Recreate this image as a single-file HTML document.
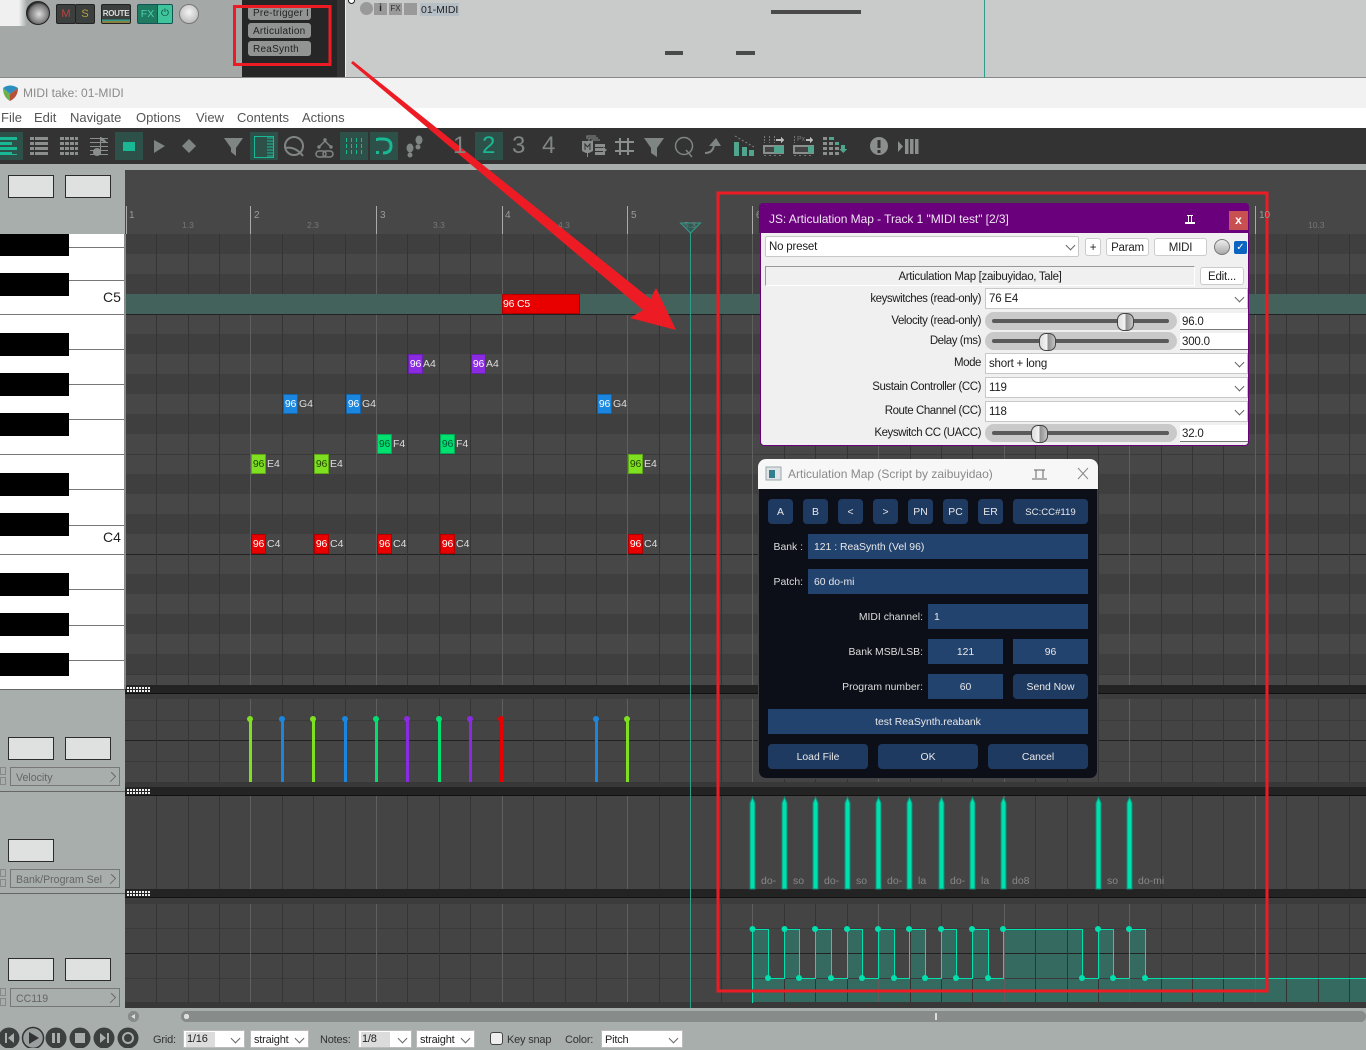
<!DOCTYPE html>
<html><head><meta charset="utf-8"><title>MIDI take: 01-MIDI</title>
<style>
html,body{margin:0;padding:0}
body{width:1366px;height:1048px;position:relative;overflow:hidden;background:#a8aeac;font-family:"Liberation Sans",sans-serif;font-size:12px;color:#222}
div,span{position:absolute;white-space:nowrap;box-sizing:border-box}
svg{position:absolute;left:0;top:0}
.box{background:#dfe1e0;border:1px solid #2c2c2c;width:46px;height:23px}
.sel{left:10px;width:110px;height:19px;border:1px solid #777;color:#666;font-size:10.6px;line-height:20px;padding-left:5px}
.sel b{position:absolute;right:4px;top:5px;width:7px;height:7px;border-top:1px solid #666;border-right:1px solid #666;transform:rotate(45deg) scaleX(.8)}
.pm{left:0;width:6px;height:8px;border:1px solid #888;background:#a8aeac}
.n{height:20px;top:0;font-size:10.5px;line-height:18px;border:1px solid rgba(0,0,0,.25);text-align:center;color:#fff;letter-spacing:-.2px}
.l{font-size:10.5px;color:#ddd;line-height:20px}
.mn{font-size:13px;color:#555;top:110px;line-height:16px}
.bar{font-size:10px;color:#9a9a9a}
.sub{font-size:8.5px;color:#777}
.c{background:#fff;border:1px solid #c8c8c8;border-radius:2px;font-size:11.5px;line-height:18px;padding-left:3px;color:#1c1c1c;letter-spacing:-.2px}
.c i{position:absolute;right:4px;top:4px;width:6px;height:6px;border-right:1px solid #666;border-bottom:1px solid #666;transform:rotate(45deg)}
.btn{background:#fff;border:1px solid #ccc;border-radius:3px;text-align:center;font-size:11.5px;line-height:18px;color:#222;letter-spacing:-.2px}
.lb{right:385px;font-size:11.5px;letter-spacing:-.44px;color:#1c1c1c;text-align:right}
.tr{height:18px;left:985px;width:192px;background:#c9c9c9;border-radius:9px}
.tr u{position:absolute;left:7px;right:8px;top:7px;height:4px;background:#5a5a5a;border-radius:2px}
.tr s{position:absolute;top:1px;width:15px;height:16px;border-radius:7px;background:linear-gradient(90deg,#ddd 0,#f4f4f4 48%,#8f8f8f 52%,#c4c4c4 100%);border:1px solid #444;text-decoration:none}
.ed{left:1180px;width:68px;height:17px;background:#fff;border-bottom:1px solid #777;font-size:11.5px;line-height:18px;padding-left:2px;color:#1c1c1c;letter-spacing:-.2px}
.g{background:#1f3a60;color:#e8e8e8;border-radius:4px;text-align:center;font-size:10.4px;line-height:27px;height:25px}
.f{background:#23436f;color:#e8e8e8;font-size:10.4px;line-height:27px;height:25px}
.t{color:#ddd;font-size:10.4px;text-align:right;line-height:27px;height:25px}
.tb{font-size:11px;color:#333;top:1033px;line-height:15px;letter-spacing:-.2px}
.cb{top:1030px;height:18px;background:#fff;border:1px solid #bbb;font-size:11px;line-height:19px;padding-left:3px;color:#222;letter-spacing:-.2px}
.cb i{position:absolute;right:5px;top:4px;width:6px;height:6px;border-right:1px solid #666;border-bottom:1px solid #666;transform:rotate(45deg)}
.lab{font-size:10.5px;color:#888;top:875px;line-height:13px}
.q{background:#929493;border-radius:3px;left:248px;width:63px;height:15px;font-size:10px;line-height:18px;padding-left:5px;color:#222;letter-spacing:.25px}
</style></head><body>

<!-- top strip -->
<div style="left:0;top:0;width:1366px;height:78px;background:#a4a9a8"></div>
<div style="left:0;top:0;width:27px;height:26px;background:linear-gradient(90deg,#f0f0f0 70%,#a4a9a8)"></div>
<div style="left:242px;top:0;width:95px;height:78px;background:#262626"></div>
<div style="left:337px;top:0;width:8px;height:78px;background:#333"></div>
<div style="left:345px;top:0;width:1021px;height:78px;background:#c9cbca;border-left:1px solid #eee"></div>
<div style="left:0;top:77px;width:1366px;height:1px;background:#888"></div>
<div class="q" style="top:5px">Pre-trigger I</div>
<div class="q" style="top:23px">Articulation</div>
<div class="q" style="top:41px">ReaSynth</div>
<div style="left:56px;top:4px;width:20px;height:20px;background:#3b3f3e;border:1px solid #222;border-radius:2px;color:#c04545;font-size:11px;text-align:center;line-height:18px">M</div>
<div style="left:75px;top:4px;width:20px;height:20px;background:#3b3f3e;border:1px solid #222;border-radius:2px;color:#b8a040;font-size:11px;text-align:center;line-height:18px">S</div>
<div style="left:101px;top:4px;width:30px;height:20px;background:linear-gradient(#3b3f3e 80%,#2f9d8c 80%,#2f9d8c 90%,#8a8040 90%);border:1px solid #222;border-radius:2px;color:#ddd;font-size:8px;font-weight:bold;text-align:center;line-height:17px;letter-spacing:-.3px">ROUTE</div>
<div style="left:137px;top:4px;width:21px;height:20px;background:#1f7a62;border:1px solid #155;border-radius:2px 0 0 2px;color:#4fd0ae;font-size:10.5px;text-align:center;line-height:18px">FX</div>
<div style="left:157px;top:4px;width:16px;height:20px;background:#3fc49c;border:1px solid #155;border-radius:0 2px 2px 0;color:#0d4a3a;font-size:10px;text-align:center;line-height:18px">&#9211;</div>
<div style="left:26px;top:1px;width:24px;height:24px;border-radius:50%;background:radial-gradient(circle at 55% 55%,#ddd,#777 55%,#111 75%);border:1px solid #222"></div>
<div style="left:179px;top:4px;width:20px;height:20px;border-radius:50%;background:radial-gradient(circle at 50% 40%,#f4f4f4,#bbb 80%);border:1px solid #777"></div>
<div style="left:360px;top:2px;width:13px;height:13px;border-radius:50%;background:#999"></div>
<div style="left:374px;top:3px;width:13px;height:12px;background:#999;color:#222;font-size:10px;font-weight:bold;text-align:center;line-height:12px">i</div>
<div style="left:389px;top:3px;width:13px;height:12px;background:#999;color:#333;font-size:8px;text-align:center;line-height:12px">FX</div>
<div style="left:404px;top:3px;width:13px;height:12px;background:#999"></div>
<div style="left:420px;top:3px;width:39px;height:13px;background:#b6bfc6;color:#222;font-size:10.5px;line-height:14px;padding-left:1px">01-MIDI</div>
<div style="left:771px;top:10px;width:90px;height:4px;background:#4a4a4a"></div>
<div style="left:665px;top:51px;width:18px;height:4px;background:#4a4a4a"></div>
<div style="left:736px;top:51px;width:19px;height:4px;background:#4a4a4a"></div>
<div style="left:984px;top:0;width:1px;height:78px;background:#2f9d8c"></div>
<div style="left:348px;top:-3px;width:7px;height:7px;border-radius:50%;background:#fff;border:1px solid #222"></div>

<!-- title + menu -->
<div style="left:0;top:78px;width:1366px;height:30px;background:#f2f2f2"></div>
<div style="left:23px;top:86px;font-size:12px;color:#8a8a8a;line-height:15px">MIDI take: 01-MIDI</div>
<svg width="20" height="20" style="left:1px;top:83px" viewBox="0 0 20 20"><path d="M2 5Q9 0 17 5L9 11Z" fill="#2a8fc0"/><path d="M2 5L9 11 9 18Q2 14 2 5Z" fill="#6eb04a"/><path d="M17 5Q17 14 9 18L9 11Z" fill="#b5523a"/></svg>
<div style="left:0;top:108px;width:1366px;height:20px;background:#fff"></div>
<div class="mn" style="left:1px">File</div><div class="mn" style="left:34px">Edit</div><div class="mn" style="left:70px">Navigate</div><div class="mn" style="left:136px">Options</div><div class="mn" style="left:196px">View</div><div class="mn" style="left:237px">Contents</div><div class="mn" style="left:302px">Actions</div>

<!-- toolbar -->
<div style="left:0;top:128px;width:1366px;height:36px;background:#333"></div>

<!-- main vector layer -->
<svg width="1366" height="1048" viewBox="0 0 1366 1048" shape-rendering="crispEdges" font-family="Liberation Sans, sans-serif">
<!-- active toolbar backgrounds -->
<g fill="#2d5049"><rect x="0" y="132" width="23" height="28"/><rect x="115" y="132" width="28" height="28"/><rect x="250" y="132" width="28" height="28"/><rect x="340" y="132" width="28" height="28"/><rect x="370" y="132" width="28" height="28"/><rect x="475" y="132" width="28" height="28"/></g>
<!-- toolbar icons -->
<g fill="#19b895">
<rect x="0" y="137" width="17" height="3"/><rect x="0" y="142" width="12" height="3"/><rect x="0" y="147" width="17" height="3"/><rect x="0" y="152" width="12" height="3"/><rect x="0" y="154" width="17" height="1"/>
<rect x="123" y="142" width="12" height="9"/>
</g>
<g fill="#8a8f8d">
<rect x="30" y="137" width="4" height="3"/><rect x="35" y="137" width="13" height="3"/><rect x="30" y="142" width="4" height="3"/><rect x="35" y="142" width="13" height="3"/><rect x="30" y="147" width="4" height="3"/><rect x="35" y="147" width="13" height="3"/><rect x="30" y="152" width="4" height="3"/><rect x="35" y="152" width="13" height="3"/>
<rect x="60" y="137" width="18" height="3"/><rect x="60" y="142" width="18" height="3"/><rect x="60" y="147" width="18" height="3"/><rect x="60" y="152" width="18" height="3"/>
<rect x="90" y="138" width="18" height="1"/><rect x="90" y="142" width="18" height="1"/><rect x="90" y="146" width="18" height="1"/><rect x="90" y="150" width="18" height="1"/><rect x="90" y="154" width="18" height="1"/><rect x="100" y="137" width="1" height="17"/>
</g>
<path d="M64.500 137V155M69.500 137V155M74.500 137V155" stroke="#333" fill="none"/>
<g shape-rendering="auto">
<circle cx="97" cy="152" r="4" fill="#8a8f8d"/><path d="M101 137Q105 139 107 143L101 141Z" fill="#8a8f8d"/>
<path d="M154 140L165 146 154 153Z" fill="#7f8583"/><path d="M189 139L196 146 189 153 182 146Z" fill="#7f8583"/>
<path d="M224 138H243L236 148V156L231 152V148Z" fill="#7f8583"/>
<circle cx="294" cy="146" r="9" fill="none" stroke="#7f8583" stroke-width="2"/><path d="M285 148Q295 146 303 156" fill="none" stroke="#7f8583" stroke-width="2"/>
<path d="M320 146L325 141 330 146" fill="none" stroke="#7f8583" stroke-width="1.5"/><circle cx="325" cy="140" r="1.700" fill="#7f8583"/><circle cx="319" cy="147" r="1.700" fill="#7f8583"/><circle cx="331" cy="147" r="1.700" fill="#7f8583"/>
<rect x="316" y="151" width="10" height="6" rx="3" fill="none" stroke="#7f8583" stroke-width="1.5"/><rect x="323" y="151" width="10" height="6" rx="3" fill="none" stroke="#7f8583" stroke-width="1.5"/>
<ellipse cx="410" cy="148" rx="3.500" ry="4.500" fill="#7f8583"/><ellipse cx="410" cy="155" rx="2.500" ry="2.500" fill="#7f8583"/><ellipse cx="419" cy="140" rx="3.500" ry="4.500" fill="#7f8583"/><ellipse cx="418" cy="147" rx="2.500" ry="2.500" fill="#7f8583"/>
<path d="M378 139H383Q391 139 391 146 391 153 383 153" fill="none" stroke="#19b895" stroke-width="3"/>
<rect x="376" y="138" width="2" height="3" fill="#19b895"/><rect x="376" y="151" width="3" height="3" fill="#19b895"/>
<path d="M644 138H664L657 148V157L651 153V148Z" fill="#7f8583"/>
<circle cx="684" cy="146" r="8.500" fill="none" stroke="#7f8583" stroke-width="1.500"/><path d="M686 150L692 157" stroke="#7f8583" stroke-width="1.500"/>
<path d="M705 153Q713 153 714 145" fill="none" stroke="#7f8583" stroke-width="2"/><path d="M709 146L716 138 721 146Z" fill="#7f8583"/>
<circle cx="879" cy="146" r="9" fill="#8a8f8d"/><rect x="877.500" y="140" width="3" height="8" fill="#333"/><rect x="877.500" y="150" width="3" height="3" fill="#333"/>
<path d="M898 141L903 146.500 898 152Z" fill="#8a8f8d"/>
<path d="M735 136L754 147" stroke="#7f8583" stroke-dasharray="2 2" fill="none"/>
<!-- midi item stack icon -->
<path d="M587 139V136H596M589 141V138H598M592 143V140H600" fill="none" stroke="#8a8f8d" stroke-width="1"/>
<path d="M582 141H593V151L589 153H586L582 151Z" fill="#8a8f8d"/><path d="M585 150V144L587.500 147 590 144V150" fill="none" stroke="#333" stroke-width="1"/><path d="M587.500 153V157" stroke="#8a8f8d"/>
<rect x="595" y="144" width="10" height="3" fill="#8a8f8d"/><rect x="595" y="148" width="10" height="3" fill="#8a8f8d"/><rect x="595" y="152" width="10" height="3" fill="#8a8f8d"/><path d="M603 147L607 150 603 153Z" fill="#8a8f8d"/>
</g>
<g fill="none" stroke="#19b895" shape-rendering="crispEdges">
<rect x="254.500" y="136.500" width="19" height="21" stroke-width="1"/>
<path d="M267 138H273M267 141H273M267 144H273M267 147H273M267 150H273M267 153H273M267 156H273"/>
<path d="M346.500 138V154M351.500 138V154M356.500 138V154M361.500 138V154" stroke-dasharray="4 2"/>
</g>
<g fill="none" stroke="#8a8f8d" stroke-width="2"><path d="M620 138V155M628 138V155M615 142H634M615 151H634"/></g>
<g fill="#4fa58d"><rect x="734" y="142" width="5" height="14"/><rect x="742" y="147" width="5" height="9"/><rect x="749" y="150" width="5" height="6"/></g>
<g>
<path d="M764.500 136V143M769.500 136V143M774.500 136V143M794.500 136V143" stroke="#777" stroke-dasharray="2 1" fill="none"/>
<rect x="763" y="145" width="21" height="9" fill="#8a8f8d"/><rect x="774" y="146" width="10" height="7" fill="#4fa58d"/><rect x="765" y="147" width="9" height="5" fill="#444"/>
<rect x="793" y="145" width="21" height="9" fill="#8a8f8d"/><rect x="808" y="146" width="6" height="7" fill="#4fa58d"/><rect x="795" y="147" width="13" height="5" fill="#444"/>
<rect x="776" y="139" width="5" height="2" fill="#bbb"/><path d="M781 137V143L784 140Z" fill="#bbb"/><rect x="806" y="139" width="4" height="2" fill="#bbb"/><path d="M810 137V143L813 140Z" fill="#bbb"/>
<path d="M764 155.500H784M794 155.500H814" stroke="#777" stroke-dasharray="2 3" fill="none"/>
</g>
<g fill="#8a8f8d"><rect x="823" y="137" width="4" height="3"/><rect x="823" y="142" width="4" height="3"/><rect x="829" y="142" width="4" height="3"/><rect x="823" y="147" width="4" height="3"/><rect x="829" y="147" width="4" height="3"/><rect x="835" y="147" width="4" height="3"/><rect x="823" y="152" width="4" height="3"/><rect x="829" y="152" width="4" height="3"/><rect x="835" y="152" width="4" height="3"/></g>
<rect x="829" y="137" width="5" height="3" fill="#4fa58d"/><rect x="835" y="142" width="4" height="3" fill="#4fa58d"/>
<rect x="841" y="145" width="4" height="4" fill="#4fa58d"/><path d="M839 149H847L843 153Z" fill="#4fa58d"/>
<g fill="#8a8f8d"><rect x="905" y="139" width="3.500" height="15"/><rect x="910" y="139" width="3.500" height="15"/><rect x="915" y="139" width="3.500" height="15"/></g>

<!-- gray band + ruler -->
<rect x="0" y="164" width="1366" height="6" fill="#a8aeac"/>
<rect x="125" y="170" width="1241" height="64" fill="#474747"/>
<!-- rows -->
<rect x="125" y="234" width="1241" height="451" fill="#474747"/>
<g fill="#3f3f3f"><rect x="125" y="234" width="1241" height="20"/><rect x="125" y="274" width="1241" height="20"/><rect x="125" y="334" width="1241" height="20"/><rect x="125" y="374" width="1241" height="20"/><rect x="125" y="414" width="1241" height="20"/><rect x="125" y="474" width="1241" height="20"/><rect x="125" y="514" width="1241" height="20"/><rect x="125" y="574" width="1241" height="20"/><rect x="125" y="614" width="1241" height="20"/><rect x="125" y="654" width="1241" height="20"/></g>
<!-- lanes -->
<rect x="125" y="685" width="1241" height="323" fill="#444"/>
<rect x="125" y="685" width="1241" height="8" fill="#232323"/><rect x="125" y="693" width="1241" height="1" fill="#111"/><rect x="125" y="694" width="1241" height="5" fill="#3c3c3c"/>
<rect x="125" y="782" width="1241" height="5" fill="#383838"/><rect x="125" y="787" width="1241" height="8" fill="#232323"/><rect x="125" y="795" width="1241" height="1" fill="#111"/>
<rect x="125" y="889" width="1241" height="8" fill="#232323"/><rect x="125" y="897" width="1241" height="1" fill="#111"/><rect x="125" y="898" width="1241" height="6" fill="#3c3c3c"/>
<rect x="125" y="1002" width="1241" height="6" fill="#383838"/>
<!-- CC fill -->
<path d="M752 929H768V978H784V929H799V978H815V929H831V978H847V929H862V978H878V929H894V978H909V929H925V978H941V929H956V978H972V929H988V978H1003V929H1082V978H1098V929H1113V978H1129V929H1145V978H1366V1002H752Z" fill="#356a60"/>
<!-- horizontal lines -->
<path d="M125 554.500H1366M125 740.500H1366M125 953.500H1366" stroke="#222" fill="none"/>
<path d="M125 720.500H1366M125 761.500H1366M125 928.500H1366M125 978.500H1366" stroke="#3a3a3a" fill="none"/>
<path d="M125 454.500H1366M125 674.500H1366" stroke="#3a3a3a" fill="none"/>
<!-- beat lines grid -->
<g fill="none" stroke="#343434">
<path d="M156.500 234V685M188.500 234V685M219.500 234V685M282.500 234V685M313.500 234V685M345.500 234V685M407.500 234V685M439.500 234V685M470.500 234V685M533.500 234V685M565.500 234V685M596.500 234V685M659.500 234V685M690.500 234V685M721.500 234V685M784.500 234V685M815.500 234V685M847.500 234V685M910.500 234V685M941.500 234V685M972.500 234V685M1035.500 234V685M1067.500 234V685M1098.500 234V685M1161.500 234V685M1192.500 234V685M1223.500 234V685M1286.500 234V685M1318.500 234V685M1349.500 234V685"/>
<path d="M156.500 699V782M188.500 699V782M219.500 699V782M282.500 699V782M313.500 699V782M345.500 699V782M407.500 699V782M439.500 699V782M470.500 699V782M533.500 699V782M565.500 699V782M596.500 699V782M659.500 699V782M690.500 699V782M721.500 699V782M784.500 699V782M815.500 699V782M847.500 699V782M910.500 699V782M941.500 699V782M972.500 699V782M1035.500 699V782M1067.500 699V782M1098.500 699V782M1161.500 699V782M1192.500 699V782M1223.500 699V782M1286.500 699V782M1318.500 699V782M1349.500 699V782"/>
<path d="M156.500 796V889M188.500 796V889M219.500 796V889M282.500 796V889M313.500 796V889M345.500 796V889M407.500 796V889M439.500 796V889M470.500 796V889M533.500 796V889M565.500 796V889M596.500 796V889M659.500 796V889M690.500 796V889M721.500 796V889M784.500 796V889M815.500 796V889M847.500 796V889M910.500 796V889M941.500 796V889M972.500 796V889M1035.500 796V889M1067.500 796V889M1098.500 796V889M1161.500 796V889M1192.500 796V889M1223.500 796V889M1286.500 796V889M1318.500 796V889M1349.500 796V889"/>
<path d="M156.500 904V1002M188.500 904V1002M219.500 904V1002M282.500 904V1002M313.500 904V1002M345.500 904V1002M407.500 904V1002M439.500 904V1002M470.500 904V1002M533.500 904V1002M565.500 904V1002M596.500 904V1002M659.500 904V1002M690.500 904V1002M721.500 904V1002M784.500 904V1002M815.500 904V1002M847.500 904V1002M910.500 904V1002M941.500 904V1002M972.500 904V1002M1035.500 904V1002M1067.500 904V1002M1098.500 904V1002M1161.500 904V1002M1192.500 904V1002M1223.500 904V1002M1286.500 904V1002M1318.500 904V1002M1349.500 904V1002"/>
</g>
<!-- bar lines -->
<g fill="none" stroke="#5f5f5f">
<path d="M250.500 206V685M376.500 206V685M502.500 206V685M627.500 206V685M752.500 206V685M878.500 206V685M1004.500 206V685M1129.500 206V685M1255.500 206V685"/>
<path d="M250.500 699V782M376.500 699V782M502.500 699V782M627.500 699V782M752.500 699V782M878.500 699V782M1004.500 699V782M1129.500 699V782M1255.500 699V782M250.500 796V889M376.500 796V889M502.500 796V889M627.500 796V889M752.500 796V889M878.500 796V889M1004.500 796V889M1129.500 796V889M1255.500 796V889M250.500 904V1002M376.500 904V1002M502.500 904V1002M627.500 904V1002M752.500 904V1002M878.500 904V1002M1004.500 904V1002M1129.500 904V1002M1255.500 904V1002"/>
</g>
<path d="M250.500 206V234M376.500 206V234M502.500 206V234M627.500 206V234M752.500 206V234M1255.500 206V234M126.500 206V234" stroke="#aaa" fill="none"/>
<!-- C5 highlighted row sits over grid -->
<rect x="125" y="294" width="1241" height="20" fill="#43625c"/>
<path d="M125 314.500H1366" stroke="#222" fill="none"/>
<!-- handle dots -->
<g fill="#eee"><path d="M127 687h2v2h-2zM130 687h2v2h-2zM133 687h2v2h-2zM136 687h2v2h-2zM139 687h2v2h-2zM142 687h2v2h-2zM145 687h2v2h-2zM148 687h2v2h-2zM127 690h2v2h-2zM130 690h2v2h-2zM133 690h2v2h-2zM136 690h2v2h-2zM139 690h2v2h-2zM142 690h2v2h-2zM145 690h2v2h-2zM148 690h2v2h-2z"/>
<path d="M127 789h2v2h-2zM130 789h2v2h-2zM133 789h2v2h-2zM136 789h2v2h-2zM139 789h2v2h-2zM142 789h2v2h-2zM145 789h2v2h-2zM148 789h2v2h-2zM127 792h2v2h-2zM130 792h2v2h-2zM133 792h2v2h-2zM136 792h2v2h-2zM139 792h2v2h-2zM142 792h2v2h-2zM145 792h2v2h-2zM148 792h2v2h-2z"/>
<path d="M127 891h2v2h-2zM130 891h2v2h-2zM133 891h2v2h-2zM136 891h2v2h-2zM139 891h2v2h-2zM142 891h2v2h-2zM145 891h2v2h-2zM148 891h2v2h-2zM127 894h2v2h-2zM130 894h2v2h-2zM133 894h2v2h-2zM136 894h2v2h-2zM139 894h2v2h-2zM142 894h2v2h-2zM145 894h2v2h-2zM148 894h2v2h-2z"/></g>
<!-- piano -->
<rect x="0" y="234" width="125" height="455" fill="#fff"/>
<path d="M0 247.500H125M0 280.500H125M0 314.500H125M0 349.500H125M0 384.500H125M0 419.500H125M0 454.500H125M0 489.500H125M0 525.500H125M0 554.500H125M0 589.500H125M0 625.500H125M0 660.500H125" stroke="#777" fill="none"/>
<g fill="#000"><rect x="0" y="234" width="69" height="22"/><rect x="0" y="273" width="69" height="23"/><rect x="0" y="333" width="69" height="23"/><rect x="0" y="373" width="69" height="23"/><rect x="0" y="413" width="69" height="23"/><rect x="0" y="473" width="69" height="23"/><rect x="0" y="513" width="69" height="23"/><rect x="0" y="573" width="69" height="23"/><rect x="0" y="613" width="69" height="23"/><rect x="0" y="653" width="69" height="23"/></g>
<rect x="124" y="234" width="2" height="455" fill="#8a8a8a"/>
<path d="M0 689.500H125M0 791.500H125M0 893.500H125" stroke="#666" fill="none"/>
<!-- velocity -->
<g shape-rendering="auto">
<g stroke-width="3" fill="none">
<path d="M250.500 720V782" stroke="#7ee020"/><path d="M282.500 720V782" stroke="#1a86e0"/><path d="M313.500 720V782" stroke="#7ee020"/><path d="M345.500 720V782" stroke="#1a86e0"/><path d="M376.500 720V782" stroke="#00e070"/><path d="M407.500 720V782" stroke="#8a2be2"/><path d="M439.500 720V782" stroke="#00e070"/><path d="M470.500 720V782" stroke="#8a2be2"/><path d="M501.500 720V782" stroke="#e80000"/><path d="M596.500 720V782" stroke="#1a86e0"/><path d="M627.500 720V782" stroke="#7ee020"/>
</g>
<circle cx="250" cy="719" r="3" fill="#7ee020"/><circle cx="282" cy="719" r="3" fill="#1a86e0"/><circle cx="313" cy="719" r="3" fill="#7ee020"/><circle cx="345" cy="719" r="3" fill="#1a86e0"/><circle cx="376" cy="719" r="3" fill="#00e070"/><circle cx="407" cy="719" r="3" fill="#8a2be2"/><circle cx="439" cy="719" r="3" fill="#00e070"/><circle cx="470" cy="719" r="3" fill="#8a2be2"/><circle cx="501" cy="719" r="3" fill="#e80000"/><circle cx="596" cy="719" r="3" fill="#1a86e0"/><circle cx="627" cy="719" r="3" fill="#7ee020"/>
<!-- bank bars -->
<g fill="#00dfae" stroke="#0f8f77">
<path d="M750 889V803L752.500 797 755 803V889Z"/><path d="M782 889V803L784.500 797 787 803V889Z"/><path d="M813 889V803L815.500 797 818 803V889Z"/><path d="M845 889V803L847.500 797 850 803V889Z"/><path d="M876 889V803L878.500 797 881 803V889Z"/><path d="M907 889V803L909.500 797 912 803V889Z"/><path d="M939 889V803L941.500 797 944 803V889Z"/><path d="M970 889V803L972.500 797 975 803V889Z"/><path d="M1001 889V803L1003.500 797 1006 803V889Z"/><path d="M1096 889V803L1098.500 797 1101 803V889Z"/><path d="M1127 889V803L1129.500 797 1132 803V889Z"/>
</g>
<!-- cc line -->
<path d="M752.500 1003V929.500H768.500V978.500H784.500V929.500H799.500V978.500H815.500V929.500H831.500V978.500H847.500V929.500H862.500V978.500H878.500V929.500H894.500V978.500H909.500V929.500H925.500V978.500H941.500V929.500H956.500V978.500H972.500V929.500H988.500V978.500H1003.500V929.500H1082.500V978.500H1098.500V929.500H1113.500V978.500H1129.500V929.500H1145.500V978.500H1366" fill="none" stroke="#00dfae" stroke-width="1" shape-rendering="crispEdges"/>
<g fill="#00dfae"><circle cx="752.500" cy="929" r="3"/><circle cx="784.500" cy="929" r="3"/><circle cx="815" cy="929" r="3"/><circle cx="847" cy="929" r="3"/><circle cx="878" cy="929" r="3"/><circle cx="909" cy="929" r="3"/><circle cx="941" cy="929" r="3"/><circle cx="972" cy="929" r="3"/><circle cx="1003" cy="929" r="3"/><circle cx="1098" cy="929" r="3"/><circle cx="1129" cy="929" r="3"/>
<circle cx="768" cy="978" r="3"/><circle cx="799" cy="978" r="3"/><circle cx="831" cy="978" r="3"/><circle cx="862" cy="978" r="3"/><circle cx="894" cy="978" r="3"/><circle cx="925" cy="978" r="3"/><circle cx="956" cy="978" r="3"/><circle cx="988" cy="978" r="3"/><circle cx="1082" cy="978" r="3"/><circle cx="1113" cy="978" r="3"/><circle cx="1145" cy="978" r="3"/></g>
<!-- playhead -->
<path d="M680.500 223H700.500L690.500 233Z" fill="#2e5c55" stroke="#2f9d8c"/>
</g>
<rect x="690" y="232" width="1" height="776" fill="#2f9d8c"/>
<!-- bottom scrollbar -->
<rect x="0" y="1008" width="1366" height="40" fill="#a8aeac"/>
<rect x="181" y="1011" width="1185" height="11" rx="5" fill="#878c8b"/>
<rect x="128" y="1011" width="11" height="11" rx="5" fill="#878c8b"/>
<path d="M135 1014V1019L131 1016.500Z" fill="#ddd"/>
<rect x="184" y="1014" width="5" height="5" rx="2" fill="#ddd"/>
<rect x="935" y="1013" width="2" height="7" fill="#ddd"/>
<!-- transport -->
<g shape-rendering="auto">
<circle cx="9" cy="1038" r="10.500" fill="#3c4140"/><circle cx="33" cy="1038" r="10.500" fill="#9aa09f" stroke="#333" stroke-width="1.500"/><circle cx="56" cy="1038" r="10.500" fill="#3c4140"/><circle cx="80" cy="1038" r="10.500" fill="#3c4140"/><circle cx="104" cy="1038" r="10.500" fill="#3c4140"/><circle cx="128" cy="1038" r="10.500" fill="#3c4140"/>
<path d="M5 1033h2v10h-2zM14 1033v10l-6-5z" fill="#a9aeac"/><path d="M29 1032l10 6-10 6z" fill="#333"/><path d="M52 1033h3v10h-3zM57 1033h3v10h-3z" fill="#a9aeac"/><rect x="75" y="1033" width="10" height="10" fill="#a9aeac"/><path d="M100 1033l6 5-6 5zM107 1033h2v10h-2z" fill="#a9aeac"/><circle cx="128" cy="1038" r="5" fill="none" stroke="#a9aeac" stroke-width="2"/>
</g>
<!-- red annotations -->
<g shape-rendering="auto"><path d="M351 63L353 61 650.500 299 656 288 676 330 630 318 643 310Z" fill="#ed1c24"/></g>
<rect x="234.500" y="6.500" width="95.500" height="58" fill="none" stroke="#ed1c24" stroke-width="3"/>
<rect x="718" y="193" width="549" height="798" fill="none" stroke="#ed1c24" stroke-width="3"/>
</svg>

<!-- toolbar digits -->
<div style="left:453px;top:132px;font-size:24px;color:#7f8583;line-height:28px">1</div>
<div style="left:482px;top:132px;font-size:24px;color:#19b895;line-height:28px">2</div>
<div style="left:512px;top:132px;font-size:24px;color:#7f8583;line-height:28px">3</div>
<div style="left:542px;top:132px;font-size:24px;color:#7f8583;line-height:28px">4</div>
<div style="left:797px;top:136px;font-size:7px;color:#777;line-height:8px">Px</div>

<!-- ruler labels -->
<div class="bar" style="left:129px;top:210px">1</div><div class="bar" style="left:254px;top:210px">2</div><div class="bar" style="left:380px;top:210px">3</div><div class="bar" style="left:505px;top:210px">4</div><div class="bar" style="left:631px;top:210px">5</div><div class="bar" style="left:756px;top:210px">6</div><div class="bar" style="left:1259px;top:210px">10</div>
<div class="sub" style="left:182px;top:220px">1.3</div><div class="sub" style="left:307px;top:220px">2.3</div><div class="sub" style="left:433px;top:220px">3.3</div><div class="sub" style="left:558px;top:220px">4.3</div><div class="sub" style="left:684px;top:220px">5.3</div><div class="sub" style="left:1308px;top:220px">10.3</div>

<!-- piano labels -->
<div style="left:103px;top:289px;font-size:14px;color:#222;line-height:16px">C5</div>
<div style="left:103px;top:529px;font-size:14px;color:#222;line-height:16px">C4</div>

<!-- left boxes -->
<div class="box" style="left:8px;top:175px"></div><div class="box" style="left:65px;top:175px"></div>
<div class="box" style="left:8px;top:737px"></div><div class="box" style="left:65px;top:737px"></div>
<div class="box" style="left:8px;top:839px"></div>
<div class="box" style="left:8px;top:958px"></div><div class="box" style="left:65px;top:958px"></div>
<div class="sel" style="top:767px">Velocity<b></b></div><div class="pm" style="top:767px"></div><div class="pm" style="top:777px"></div>
<div class="sel" style="top:869px">Bank/Program Sel<b></b></div><div class="pm" style="top:869px"></div><div class="pm" style="top:879px"></div>
<div class="sel" style="top:988px">CC119<b></b></div><div class="pm" style="top:988px"></div><div class="pm" style="top:998px"></div>

<!-- notes -->
<div class="n" style="left:502px;top:294px;width:78px;background:#e80000;text-align:left;padding-left:0">96 C5</div>
<div class="n" style="left:408px;top:354px;width:15px;background:#8a2be2">96</div><div class="l" style="left:423px;top:354px">A4</div>
<div class="n" style="left:471px;top:354px;width:15px;background:#8a2be2">96</div><div class="l" style="left:486px;top:354px">A4</div>
<div class="n" style="left:283px;top:394px;width:15px;background:#1a86e0">96</div><div class="l" style="left:299px;top:394px">G4</div>
<div class="n" style="left:346px;top:394px;width:15px;background:#1a86e0">96</div><div class="l" style="left:362px;top:394px">G4</div>
<div class="n" style="left:597px;top:394px;width:15px;background:#1a86e0">96</div><div class="l" style="left:613px;top:394px">G4</div>
<div class="n" style="left:377px;top:434px;width:15px;background:#00e070;color:#053">96</div><div class="l" style="left:393px;top:434px">F4</div>
<div class="n" style="left:440px;top:434px;width:15px;background:#00e070;color:#053">96</div><div class="l" style="left:456px;top:434px">F4</div>
<div class="n" style="left:251px;top:454px;width:15px;background:#7ee020;color:#240">96</div><div class="l" style="left:267px;top:454px">E4</div>
<div class="n" style="left:314px;top:454px;width:15px;background:#7ee020;color:#240">96</div><div class="l" style="left:330px;top:454px">E4</div>
<div class="n" style="left:628px;top:454px;width:15px;background:#7ee020;color:#240">96</div><div class="l" style="left:644px;top:454px">E4</div>
<div class="n" style="left:251px;top:534px;width:15px;background:#e80000">96</div><div class="l" style="left:267px;top:534px">C4</div>
<div class="n" style="left:314px;top:534px;width:15px;background:#e80000">96</div><div class="l" style="left:330px;top:534px">C4</div>
<div class="n" style="left:377px;top:534px;width:15px;background:#e80000">96</div><div class="l" style="left:393px;top:534px">C4</div>
<div class="n" style="left:440px;top:534px;width:15px;background:#e80000">96</div><div class="l" style="left:456px;top:534px">C4</div>
<div class="n" style="left:628px;top:534px;width:15px;background:#e80000">96</div><div class="l" style="left:644px;top:534px">C4</div>

<!-- bank labels -->
<div class="lab" style="left:761px">do-</div><div class="lab" style="left:793px">so</div><div class="lab" style="left:824px">do-</div><div class="lab" style="left:856px">so</div><div class="lab" style="left:887px">do-</div><div class="lab" style="left:918px">la</div><div class="lab" style="left:950px">do-</div><div class="lab" style="left:981px">la</div><div class="lab" style="left:1012px">do8</div><div class="lab" style="left:1107px">so</div><div class="lab" style="left:1138px">do-mi</div>

<!-- bottom bar -->
<div class="tb" style="left:153px">Grid:</div>
<div class="cb" style="left:183px;width:62px"><span style="left:2px;top:1px;width:29px;height:15px;background:#dcdcdc;padding-left:1px;line-height:14px">1/16</span><i></i></div>
<div class="cb" style="left:250px;width:59px">straight<i></i></div>
<div class="tb" style="left:320px">Notes:</div>
<div class="cb" style="left:358px;width:54px"><span style="left:2px;top:1px;width:29px;height:15px;background:#dcdcdc;padding-left:1px;line-height:14px">1/8</span><i></i></div>
<div class="cb" style="left:416px;width:59px">straight<i></i></div>
<div style="left:490px;top:1032px;width:13px;height:13px;background:#eee;border:1px solid #444;border-radius:3px"></div>
<div class="tb" style="left:507px">Key snap</div>
<div class="tb" style="left:565px">Color:</div>
<div class="cb" style="left:601px;width:82px">Pitch<i></i></div>

<!-- JS window -->
<div style="left:760px;top:203px;width:489px;height:243px;background:#f0f0f0;border:1px solid #6a007c;border-radius:4px"></div>
<div style="left:759px;top:203px;width:490px;height:30px;background:#6a007c;border-radius:4px 4px 0 0;color:#f0e6f2;font-size:12px;line-height:33px;padding-left:10px;letter-spacing:-.06px">JS: Articulation Map - Track 1 "MIDI test" [2/3]</div>
<svg width="12" height="12" style="left:1184px;top:214px" viewBox="0 0 12 12" shape-rendering="crispEdges"><path d="M3 1H9V2H8V8H11V10H1V8H4V2H3Z" fill="#fff"/><rect x="5" y="2" width="2" height="6" fill="#6a007c"/></svg>
<div style="left:1229px;top:211px;width:19px;height:19px;background:#c85050;color:#fff;font-size:12px;font-weight:bold;text-align:center;line-height:18px">x</div>

<div class="c" style="left:765px;top:236px;width:314px;height:21px;line-height:21px">No preset<i style="top:5px"></i></div>
<div class="btn" style="left:1085px;top:238px;width:16px;height:18px">+</div>
<div class="btn" style="left:1106px;top:238px;width:43px;height:18px">Param</div>
<div class="btn" style="left:1154px;top:238px;width:53px;height:18px">MIDI</div>
<div style="left:1214px;top:239px;width:16px;height:16px;border-radius:50%;background:linear-gradient(#eee,#aaa);border:1px solid #777"></div>
<div style="left:1234px;top:241px;width:13px;height:13px;background:#0a64c0;border-radius:2px;color:#fff;font-size:10px;text-align:center;line-height:13px">&#10003;</div>
<div style="left:765px;top:266px;width:430px;height:20px;border:1px solid #999;border-right-color:#fff;border-bottom-color:#fff;font-size:11.5px;line-height:21px;text-align:center;color:#1c1c1c;letter-spacing:-.32px">Articulation Map [zaibuyidao, Tale]</div>
<div class="btn" style="left:1200px;top:267px;width:44px;height:18px">Edit...</div>

<div class="lb" style="top:293px">keyswitches (read-only)</div>
<div class="c" style="left:985px;top:288px;width:263px;height:21px;line-height:21px;border-radius:0">76 E4<i style="top:5px"></i></div>
<div class="lb" style="top:315px">Velocity (read-only)</div>
<div class="tr" style="top:312px"><u></u><s style="left:132px"></s></div><div class="ed" style="top:313px">96.0</div>
<div class="lb" style="top:335px">Delay (ms)</div>
<div class="tr" style="top:332px"><u></u><s style="left:54px"></s></div><div class="ed" style="top:333px">300.0</div>
<div class="lb" style="top:357px">Mode</div>
<div class="c" style="left:985px;top:353px;width:263px;height:21px;line-height:20px;border-radius:0">short + long<i style="top:5px"></i></div>
<div class="lb" style="top:381px">Sustain Controller (CC)</div>
<div class="c" style="left:985px;top:377px;width:263px;height:21px;line-height:20px;border-radius:0">119<i style="top:5px"></i></div>
<div class="lb" style="top:405px">Route Channel (CC)</div>
<div class="c" style="left:985px;top:401px;width:263px;height:21px;line-height:20px;border-radius:0">118<i style="top:5px"></i></div>
<div class="lb" style="top:427px">Keyswitch CC (UACC)</div>
<div class="tr" style="top:424px"><u></u><s style="left:46px"></s></div><div class="ed" style="top:425px">32.0</div>

<!-- Script window -->
<div style="left:758px;top:459px;width:340px;height:320px;background:#0d0f18;border-radius:8px;border:1px solid #444"></div>
<div style="left:758px;top:459px;width:340px;height:30px;background:#f7f7f7;border-radius:8px 8px 0 0;color:#8a8a8a;font-size:12px;line-height:30px;padding-left:30px">Articulation Map (Script by zaibuyidao)</div>
<svg width="340" height="30" style="left:758px;top:459px" viewBox="0 0 340 30"><rect x="8" y="8" width="15" height="13" fill="#dfe3e6" stroke="#9aa"/><rect x="11" y="11" width="6" height="8" fill="#2f7f8f"/><path d="M320 9L330 20M330 9L320 20" stroke="#888" stroke-width="1" fill="none"/><path d="M276 11H287M278 11V19M285 11V19M274 20H289" stroke="#666" fill="none"/></svg>

<div class="g" style="left:768px;top:499px;width:25px">A</div><div class="g" style="left:803px;top:499px;width:25px">B</div><div class="g" style="left:838px;top:499px;width:25px">&lt;</div><div class="g" style="left:873px;top:499px;width:25px">&gt;</div><div class="g" style="left:908px;top:499px;width:25px">PN</div><div class="g" style="left:943px;top:499px;width:25px">PC</div><div class="g" style="left:978px;top:499px;width:25px">ER</div><div class="g" style="left:1013px;top:499px;width:75px;font-size:9.6px">SC:CC#119</div>
<div class="t" style="left:760px;top:534px;width:43px">Bank :</div><div class="f" style="left:808px;top:534px;width:280px;padding-left:6px">121 : ReaSynth (Vel 96)</div>
<div class="t" style="left:760px;top:569px;width:43px">Patch:</div><div class="f" style="left:808px;top:569px;width:280px;padding-left:6px">60 do-mi</div>
<div class="t" style="left:820px;top:604px;width:103px">MIDI channel:</div><div class="f" style="left:928px;top:604px;width:160px;padding-left:6px">1</div>
<div class="t" style="left:820px;top:639px;width:103px">Bank MSB/LSB:</div><div class="f" style="left:928px;top:639px;width:75px;text-align:center">121</div><div class="f" style="left:1013px;top:639px;width:75px;text-align:center">96</div>
<div class="t" style="left:820px;top:674px;width:103px">Program number:</div><div class="f" style="left:928px;top:674px;width:75px;text-align:center">60</div><div class="g" style="left:1013px;top:674px;width:75px">Send Now</div>
<div class="f" style="left:768px;top:709px;width:320px;text-align:center">test ReaSynth.reabank</div>
<div class="g" style="left:768px;top:744px;width:100px">Load File</div><div class="g" style="left:878px;top:744px;width:100px">OK</div><div class="g" style="left:988px;top:744px;width:100px">Cancel</div>
</body></html>
